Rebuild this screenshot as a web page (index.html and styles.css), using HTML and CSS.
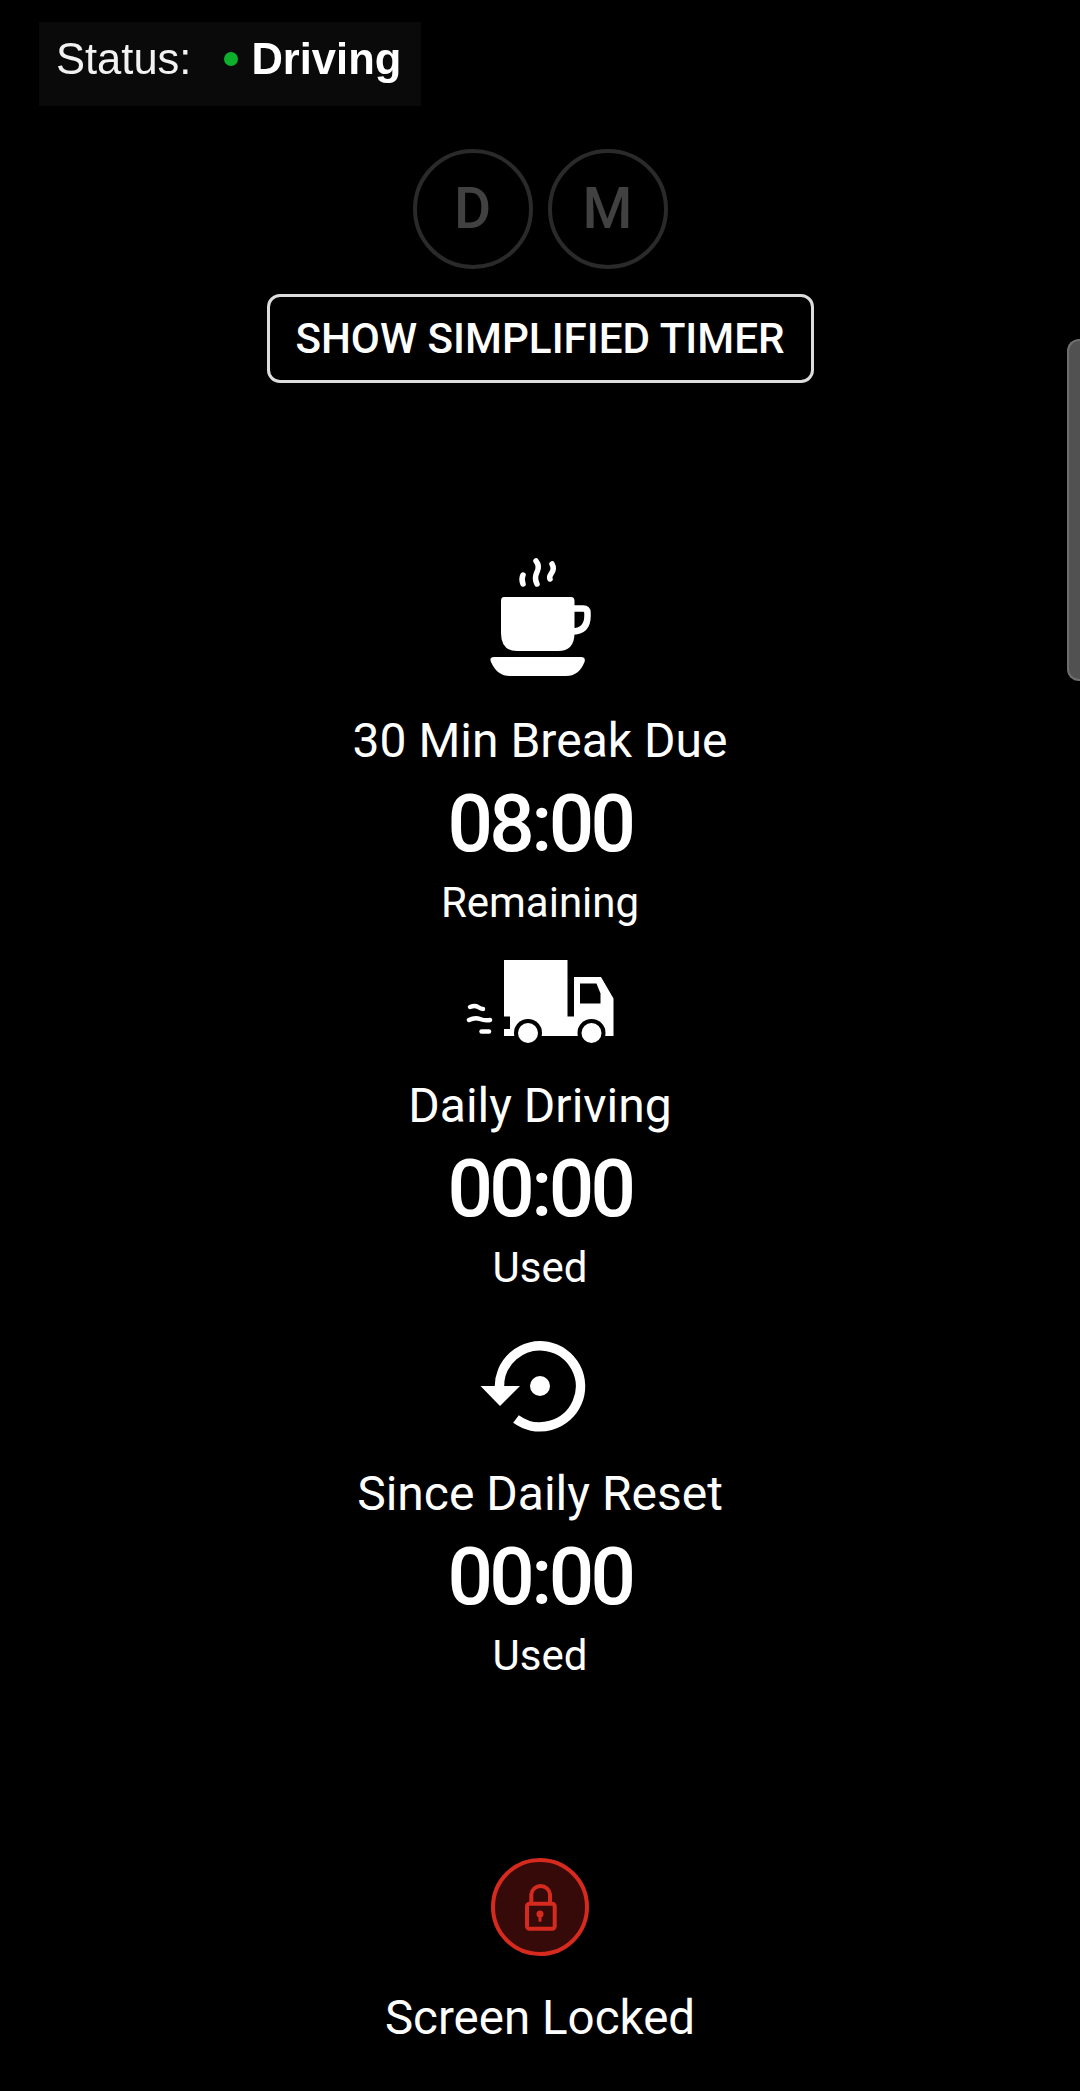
FILE: index.html
```html
<!DOCTYPE html>
<html lang="en">
<head>
    <meta charset="UTF-8" />
    <meta name="viewport" content="width=device-width, initial-scale=1.0" />
    <title>Timers</title>
    <link rel="stylesheet" href="styles.css">
</head>
<body>
    <div class="status-box">
        <span class="status-label">Status:</span>
        <span class="status-dot"></span>
        <strong class="status-value">Driving</strong>
    </div>

    <div class="rulesets">
        <div class="ruleset">D</div>
        <div class="ruleset">M</div>
    </div>

    <button class="simple-button">SHOW SIMPLIFIED TIMER</button>

    <div class="timer timer-break">
        <svg class="icon" width="180" height="172" viewBox="0 0 180 172">
            <path d="M54 56H121Q124.5 56 124.5 60V92Q124.5 110 108 110H67Q51 110 51 92V60Q51 56 54 56Z" fill="#fff"/>
            <path d="M123 67.5H133Q137.5 67.5 137.5 72V75Q137.5 90.5 122 90.5" fill="none" stroke="#fff" stroke-width="6.5"/>
            <path d="M44 116H131Q136 116 134.5 121Q129 135 116 135H60Q47 135 41 121Q39 116 44 116Z" fill="#fff"/>
            <g fill="none" stroke="#fff" stroke-width="5.5" stroke-linecap="round">
                <path d="M73 34Q71 38 73 43"/>
                <path d="M86 20Q90 25 87 31Q84 37 87 43"/>
                <path d="M102 23Q105 28 101 33Q99 36 100 38"/>
            </g>
        </svg>
        <div class="timer-label">30 Min Break Due</div>
        <div class="timer-value">08:00</div>
        <div class="timer-note">Remaining</div>
    </div>

    <div class="timer timer-driving">
        <svg class="icon" width="180" height="132" viewBox="0 0 180 132">
            <path d="M54 14H117.5V70.5H124V31H151L163.5 52.5V90H54Z" fill="#fff"/>
            <path d="M130 37.5H146.5L150.5 47.5V57.5H130Z" fill="#000"/>
            <circle cx="78" cy="87" r="14" fill="#000"/>
            <circle cx="141.5" cy="87" r="14" fill="#000"/>
            <circle cx="78" cy="87" r="10" fill="#fff"/>
            <circle cx="141.5" cy="87" r="10" fill="#fff"/>
            <path d="M54 70.5H60V83H54Z" fill="#000"/>
            <g fill="none" stroke="#fff" stroke-width="4.5" stroke-linecap="round">
                <path d="M20 61Q25 59 28 61T33 63"/>
                <path d="M19 74Q25 71 30 73T40 74"/>
                <path d="M31.5 85.5H39"/>
            </g>
        </svg>
        <div class="timer-label">Daily Driving</div>
        <div class="timer-value">00:00</div>
        <div class="timer-note">Used</div>
    </div>

    <div class="timer timer-reset">
        <svg class="icon" width="180" height="140" viewBox="0 0 180 140">
            <path d="M49.5 62A40.5 40.5 0 1 1 66 93" fill="none" stroke="#fff" stroke-width="9.5"/>
            <path d="M30.5 60H70L50 80Z" fill="#fff"/>
            <circle cx="90" cy="60" r="10" fill="#fff"/>
        </svg>
        <div class="timer-label">Since Daily Reset</div>
        <div class="timer-value">00:00</div>
        <div class="timer-note">Used</div>
    </div>

    <div class="lock">
        <svg class="icon" width="100" height="100" viewBox="0 0 100 100">
            <circle cx="50" cy="50" r="47" fill="#360a08" stroke="#d62a1e" stroke-width="4"/>
            <rect x="37" y="46.7" width="27.7" height="25" rx="2.5" fill="none" stroke="#d62a1e" stroke-width="4"/>
            <path d="M41.3 46V37.4A9.4 9.4 0 0 1 60 37.4V46" fill="none" stroke="#d62a1e" stroke-width="4"/>
            <circle cx="50" cy="57" r="3.5" fill="#d62a1e"/>
            <path d="M48.5 58H51.5V64.7H48.5Z" fill="#d62a1e"/>
        </svg>
        <div class="lock-label">Screen Locked</div>
    </div>

    <div class="scroll-handle"></div>
</body>
</html>
```

FILE: styles.css
```css
html, body {
    margin: 0;
    height: 2091px;
    background: #000;
    overflow: hidden;
}
body {
    position: relative;
    display: flex;
    flex-direction: column;
    align-items: center;
    font-family: Roboto, sans-serif;
    color: #fff;
}
.status-box {
    align-self: flex-start;
    display: flex;
    align-items: center;
    box-sizing: border-box;
    width: 382px;
    height: 84px;
    margin: 22px 0 0 39px;
    padding-left: 17px;
    padding-bottom: 10px;
    background: #0a0a0a;
    font-family: "Liberation Sans", Arial, sans-serif;
    font-size: 43.5px;
}
.status-label {
    color: #f2f2f2;
    filter: blur(0.6px);
}
.status-value {
    filter: blur(0.6px);
}
.status-dot {
    width: 14px;
    height: 14px;
    margin: 0 13px 0 33px;
    border-radius: 50%;
    background: #0db02b;
}
.rulesets {
    display: flex;
    gap: 15px;
    margin-top: 43px;
}
.ruleset {
    box-sizing: border-box;
    width: 120px;
    height: 120px;
    line-height: 112px;
    text-align: center;
    border: 4px solid #2a2a2a;
    border-radius: 50%;
    color: #414141;
    font-size: 57px;
    font-weight: 500;
}
.simple-button {
    box-sizing: border-box;
    width: 547px;
    height: 89px;
    margin-top: 25px;
    background: #000;
    border: 3px solid #ddd;
    border-radius: 13px;
    color: #fff;
    font-family: Roboto, sans-serif;
    font-size: 42.2px;
    font-weight: 500;
}
.timer {
    display: flex;
    flex-direction: column;
    align-items: center;
}
.icon {
    display: block;
}
.timer-break {
    margin-top: 158px;
}
.timer-driving {
    margin-top: 19px;
}
.timer-reset {
    margin-top: 34px;
}
.timer-label {
    height: 56px;
    line-height: 56px;
    font-size: 48px;
}
.timer-value {
    height: 110px;
    line-height: 110px;
    font-size: 80px;
    font-weight: 500;
    letter-spacing: -3.6px;
}
.timer-note {
    height: 48px;
    line-height: 48px;
    font-size: 42px;
}
.lock {
    display: flex;
    flex-direction: column;
    align-items: center;
    margin-top: 177px;
}
.lock-label {
    margin-top: 31px;
    line-height: 60px;
    font-size: 47.5px;
}
.scroll-handle {
    position: absolute;
    top: 339px;
    right: 0;
    box-sizing: border-box;
    width: 13px;
    height: 342px;
    background: #515151;
    border: 2px solid #6e6e6e;
    border-right: none;
    border-radius: 12px 0 0 12px;
}
```
